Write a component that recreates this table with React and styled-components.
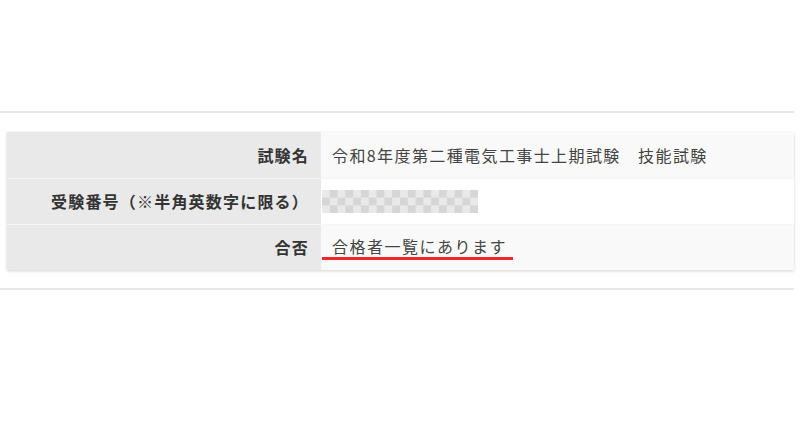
import React from "react";
import styled, { createGlobalStyle } from "styled-components";

const GlobalStyle = createGlobalStyle`
  body {
    margin: 0;
    background: #fff;
    font-family: "Noto Sans CJK JP", "Noto Sans", sans-serif;
  }
`;

const Page = styled.div`
  width: 794px;
  padding-top: 111px;
`;

const Rule = styled.div`
  height: 2px;
  background: #e8e8e8;
`;

const Table = styled.table`
  margin: 19px 0 18px 7px;
  width: 787px;
  table-layout: fixed;
  border-collapse: collapse;
  box-shadow: 0 1px 3px rgba(0, 0, 0, 0.18);
`;

const Row = styled.tr`
  height: 46px;
  border-bottom: 1px solid #f6f6f6;
  &:last-child {
    border-bottom: none;
  }
`;

const Label = styled.th`
  box-sizing: border-box;
  width: 314px;
  padding: 0 12px 0 0;
  text-align: right;
  background: #e9e9e9;
  color: #333;
  font-size: 16px;
  font-weight: 700;
  letter-spacing: 1.2px;
  white-space: nowrap;
`;

const Value = styled.td`
  padding: 0 0 0 11px;
  text-align: left;
  background: ${(p) => (p.$plain ? "#fff" : "#f9f9f9")};
  color: #444;
  font-size: 16px;
  font-weight: 400;
  letter-spacing: 1.4px;
  white-space: nowrap;
`;

const Mosaic = styled.div`
  width: 156px;
  height: 23px;
  margin-left: -10px;
  background-color: #e6e6e6;
  background-image: repeating-conic-gradient(
    #d6d6d6 0% 25%,
    #e9e9e9 0% 50%
  );
  background-size: 15.6px 15.4px;
`;

const Result = styled.span`
  display: inline-block;
  margin-left: -10px;
  padding: 0 6px 0 10px;
  line-height: 21px;
  border-bottom: 3px solid #f2252b;
  letter-spacing: 1.5px;
`;

export default function App() {
  return (
    <>
      <GlobalStyle />
      <Page>
        <Rule />
        <Table>
          <tbody>
            <Row>
              <Label>試験名</Label>
              <Value>令和8年度第二種電気工事士上期試験　技能試験</Value>
            </Row>
            <Row>
              <Label>受験番号（※半角英数字に限る）</Label>
              <Value $plain>
                <Mosaic />
              </Value>
            </Row>
            <Row>
              <Label>合否</Label>
              <Value>
                <Result>合格者一覧にあります</Result>
              </Value>
            </Row>
          </tbody>
        </Table>
        <Rule />
      </Page>
    </>
  );
}
